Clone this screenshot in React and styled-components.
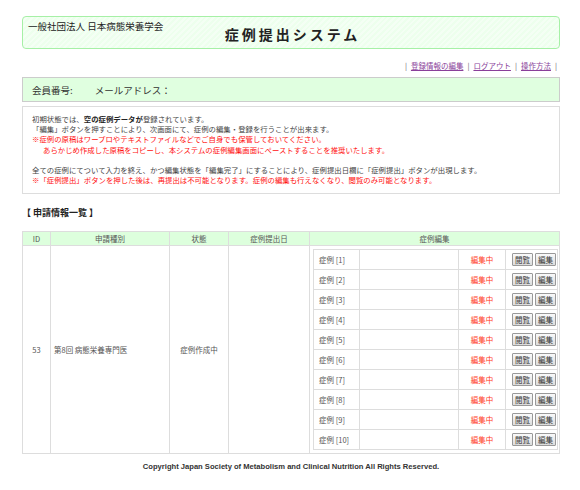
import styled, { createGlobalStyle } from 'styled-components';

const GlobalStyle = createGlobalStyle`
  body {
    margin: 0;
    background: #fff;
    font-family: "Noto Sans CJK JP", "Liberation Sans", sans-serif;
    color: #333;
  }
`;

const Page = styled.div`
  width: 538px;
  padding: 16px 20px 0 22px;
`;

const Header = styled.div`
  height: 31px;
  display: grid;
  padding: 0 5px;
  border: 1px solid #a6f0a6;
  border-radius: 4px;
  background: repeating-linear-gradient(
    135deg,
    #edffed 0px,
    #edffed 2px,
    #f4fff4 2px,
    #f4fff4 4px
  );
`;

const OrgName = styled.div`
  grid-area: 1 / 1;
  align-self: start;
  justify-self: start;
  margin-top: 3px;
  font-size: 9.5px;
  line-height: 12px;
  color: #222;
`;

const SystemTitle = styled.h1`
  grid-area: 1 / 1;
  align-self: center;
  justify-self: center;
  margin: 3px 0 0 3px;
  font-size: 14px;
  font-weight: bold;
  letter-spacing: 3px;
  color: #222;
`;

const NavBar = styled.div`
  height: 28px;
  box-sizing: border-box;
  display: flex;
  justify-content: flex-end;
  align-items: flex-end;
  padding: 0 3px 5px 0;
  font-size: 7.5px;
  line-height: 12px;
  color: #666;
`;

const NavLink = styled.a`
  color: #8a3f9a;
  text-decoration: underline;
  margin: 0 4px;
`;

const MemberBox = styled.div`
  height: 25px;
  box-sizing: border-box;
  display: flex;
  align-items: center;
  gap: 22px;
  padding: 0 9px;
  background: #e0ffe0;
  border: 1px solid #ccc;
  font-size: 9.5px;
  color: #333;
`;

const InfoBox = styled.div`
  margin-top: 4px;
  padding: 7px 9px 8px;
  border: 1px solid #ddd;
  font-size: 7.4px;
  line-height: 10.2px;
  color: #444;
`;

const Line = styled.div`
  color: ${p => (p.$red ? '#ff1010' : '#444')};
  padding-left: ${p => (p.$indent ? '11px' : '0')};
  min-height: 10.2px;
  white-space: nowrap;
`;

const Strong = styled.b`
  color: #222;
`;

const SectionTitle = styled.h2`
  margin: 13px 0 12px 0;
  font-size: 9px;
  line-height: 12px;
  font-weight: bold;
  color: #222;
`;

const Table = styled.table`
  width: 538px;
  border-collapse: collapse;
  table-layout: fixed;
  border: 1px solid #ddd;
`;

const Th = styled.th`
  height: 13px;
  padding: 0;
  background: #ddffdd;
  border: 1px solid #ddd;
  font-size: 7.5px;
  font-weight: normal;
  color: #555;
  text-align: center;
`;

const Td = styled.td`
  border: 1px solid #ddd;
  padding: ${p => (p.$inner ? '3px 1px 3px 3px' : '0 3px')};
  font-size: 7.5px;
  color: #555;
  text-align: ${p => p.$align || 'left'};
  vertical-align: middle;
`;

const CaseTable = styled.table`
  width: 100%;
  border-collapse: collapse;
  table-layout: fixed;
  border: 1px solid #ddd;
`;

const CaseCell = styled.td`
  height: 19px;
  padding: 0 ${p => (p.$buttons ? '0 0 3px' : '5px')};
  border: 1px solid #ddd;
  font-size: 7.5px;
  color: ${p => (p.$status ? '#ff3a1a' : '#555')};
  text-align: ${p => (p.$status ? 'center' : 'left')};
  white-space: nowrap;
`;

const Buttons = styled.div`
  display: flex;
  gap: 2px;
  padding-left: 3px;
`;

const SmallButton = styled.button`
  width: 21px;
  height: 13px;
  padding: 0;
  border: 1px solid #999;
  border-radius: 1px;
  background: linear-gradient(#fafafa, #dcdcdc);
  font-family: "Noto Sans CJK JP", sans-serif;
  font-size: 7.5px;
  line-height: 11px;
  color: #333;
`;

const Copyright = styled.div`
  margin-top: 8px;
  text-align: center;
  font-family: "Liberation Sans", Arial, sans-serif;
  font-size: 7.6px;
  line-height: 10px;
  font-weight: bold;
  color: #333;
`;

const cases = Array.from({ length: 10 }, (_, i) => i + 1);

export default function App() {
  return (
    <>
      <GlobalStyle />
      <Page>
        <Header>
          <OrgName>一般社団法人 日本病態栄養学会</OrgName>
          <SystemTitle>症例提出システム</SystemTitle>
        </Header>

        <NavBar>
          |<NavLink href="#">登録情報の編集</NavLink>|
          <NavLink href="#">ログアウト</NavLink>|
          <NavLink href="#">操作方法</NavLink>|
        </NavBar>

        <MemberBox>
          <span>会員番号:</span>
          <span>メールアドレス：</span>
        </MemberBox>

        <InfoBox>
          <Line>
            初期状態では、<Strong>空の症例データが</Strong>登録されています。
          </Line>
          <Line>「編集」ボタンを押すことにより、次画面にて、症例の編集・登録を行うことが出来ます。</Line>
          <Line $red>※症例の原稿はワープロやテキストファイルなどでご自身でも保管しておいてください。</Line>
          <Line $red $indent>
            あらかじめ作成した原稿をコピーし、本システムの症例編集画面にペーストすることを推奨いたします。
          </Line>
          <Line />
          <Line>
            全ての症例にてついて入力を終え、かつ編集状態を「編集完了」にすることにより、症例提出日欄に「症例提出」ボタンが出現します。
          </Line>
          <Line $red>
            ※「症例提出」ボタンを押した後は、再提出は不可能となります。症例の編集も行えなくなり、閲覧のみ可能となります。
          </Line>
        </InfoBox>

        <SectionTitle>【 申請情報一覧 】</SectionTitle>

        <Table>
          <colgroup>
            <col style={{ width: '28px' }} />
            <col style={{ width: '119px' }} />
            <col style={{ width: '59px' }} />
            <col style={{ width: '81px' }} />
            <col />
          </colgroup>
          <thead>
            <tr>
              <Th>ID</Th>
              <Th>申請種別</Th>
              <Th>状態</Th>
              <Th>症例提出日</Th>
              <Th>症例編集</Th>
            </tr>
          </thead>
          <tbody>
            <tr>
              <Td $align="center">53</Td>
              <Td>第8回 病態栄養専門医</Td>
              <Td $align="center">症例作成中</Td>
              <Td />
              <Td $inner>
                <CaseTable>
                  <colgroup>
                    <col style={{ width: '46px' }} />
                    <col style={{ width: '99px' }} />
                    <col style={{ width: '47px' }} />
                    <col />
                  </colgroup>
                  <tbody>
                    {cases.map(n => (
                      <tr key={n}>
                        <CaseCell>症例 [{n}]</CaseCell>
                        <CaseCell />
                        <CaseCell $status>編集中</CaseCell>
                        <CaseCell $buttons>
                          <Buttons>
                            <SmallButton>閲覧</SmallButton>
                            <SmallButton>編集</SmallButton>
                          </Buttons>
                        </CaseCell>
                      </tr>
                    ))}
                  </tbody>
                </CaseTable>
              </Td>
            </tr>
          </tbody>
        </Table>

        <Copyright>
          Copyright Japan Society of Metabolism and Clinical Nutrition All Rights Reserved.
        </Copyright>
      </Page>
    </>
  );
}
